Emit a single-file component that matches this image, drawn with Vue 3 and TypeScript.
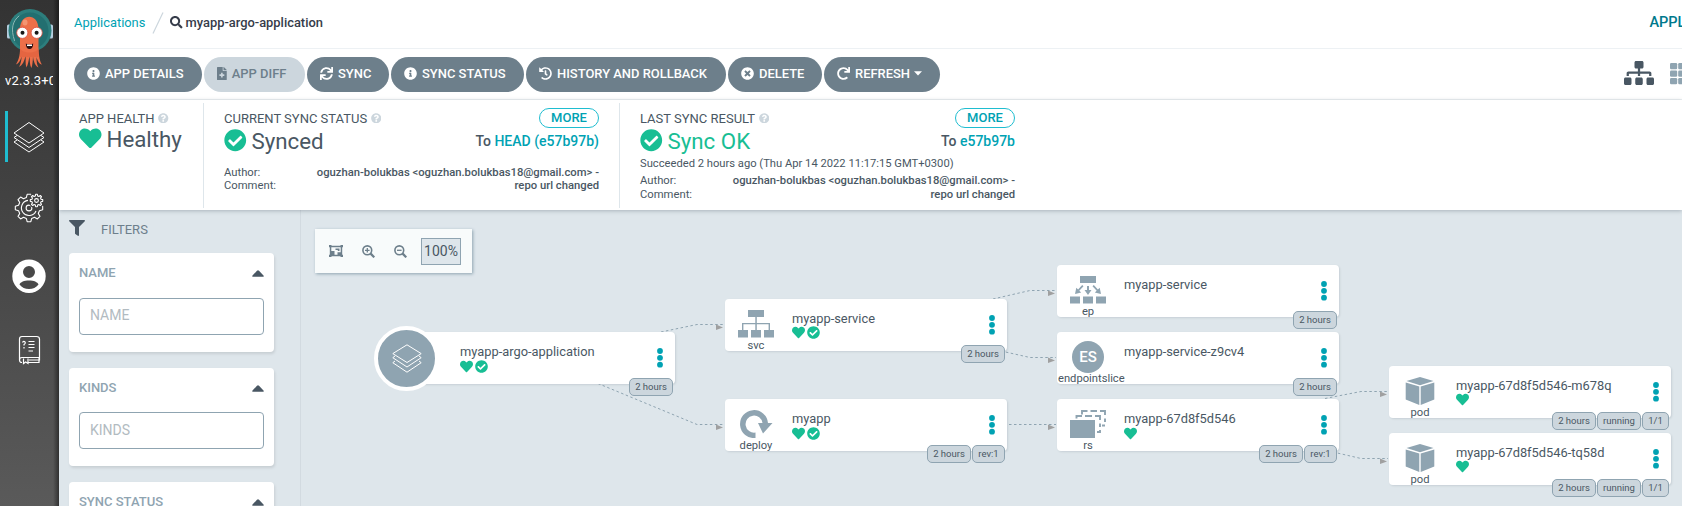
<script setup lang="ts">
interface Glyph {
  w: number
  d: string
}

const glyphs: Record<string, Glyph> = {
  heart: { w: 512, d: 'M462.3 62.6C407.5 15.9 326 24.3 275.7 76.2L256 96.5l-19.7-20.3C186.1 24.3 104.5 15.9 49.7 62.6c-62.8 53.6-66.1 149.8-9.9 207.9l193.5 199.8c12.5 12.9 32.8 12.9 45.3 0l193.5-199.8c56.3-58.1 53-154.3-9.8-207.9z' },
  check: { w: 512, d: 'M504 256c0 136.967-111.033 248-248 248S8 392.967 8 256 119.033 8 256 8s248 111.033 248 248zM227.314 387.314l184-184c6.248-6.248 6.248-16.379 0-22.627l-22.627-22.627c-6.248-6.249-16.379-6.249-22.628 0L216 308.118l-70.059-70.059c-6.248-6.248-16.379-6.248-22.628 0l-22.627 22.627c-6.248 6.248-6.248 16.379 0 22.627l104 104c6.249 6.249 16.379 6.249 22.628.001z' },
  info: { w: 512, d: 'M256 8C119.043 8 8 119.083 8 256c0 136.997 111.043 248 248 248s248-111.003 248-248C504 119.083 392.957 8 256 8zm0 110c23.196 0 42 18.804 42 42s-18.804 42-42 42-42-18.804-42-42 18.804-42 42-42zm56 254c0 6.627-5.373 12-12 12h-88c-6.627 0-12-5.373-12-12v-24c0-6.627 5.373-12 12-12h12v-64h-12c-6.627 0-12-5.373-12-12v-24c0-6.627 5.373-12 12-12h64c6.627 0 12 5.373 12 12v100h12c6.627 0 12 5.373 12 12v24z' },
  times: { w: 512, d: 'M256 8C119 8 8 119 8 256s111 248 248 248 248-111 248-248S393 8 256 8zm121.6 313.1c4.7 4.7 4.7 12.3 0 17L338 377.6c-4.7 4.7-12.3 4.7-17 0L256 312l-65.1 65.6c-4.7 4.7-12.3 4.7-17 0L134.4 338c-4.7-4.7-4.7-12.3 0-17l65.6-65-65.6-65.1c-4.7-4.7-4.7-12.3 0-17l39.6-39.6c4.7-4.7 12.3-4.7 17 0l65 65.7 65.1-65.6c4.7-4.7 12.3-4.7 17 0l39.6 39.6c4.7 4.7 4.7 12.3 0 17L312 256l65.6 65.1z' },
  question: { w: 512, d: 'M504 256c0 136.997-111.043 248-248 248S8 392.997 8 256C8 119.083 119.043 8 256 8s248 111.083 248 248zM262.655 90c-54.497 0-89.255 22.957-116.549 63.758-3.536 5.286-2.353 12.415 2.715 16.258l34.699 26.31c5.205 3.947 12.621 3.008 16.665-2.122 17.864-22.658 30.113-35.797 57.303-35.797 20.429 0 45.698 13.148 45.698 32.958 0 14.976-12.363 22.667-32.534 33.976C247.128 238.528 216 254.941 216 296v4c0 6.627 5.373 12 12 12h56c6.627 0 12-5.373 12-12v-1.333c0-28.462 83.186-29.647 83.186-106.667 0-58.002-60.165-102-116.531-102zM256 338c-25.365 0-46 20.635-46 46 0 25.364 20.635 46 46 46s46-20.636 46-46c0-25.365-20.635-46-46-46z' },
  sitemap: { w: 640, d: 'M128 352H32c-17.67 0-32 14.33-32 32v96c0 17.67 14.33 32 32 32h96c17.67 0 32-14.33 32-32v-96c0-17.67-14.33-32-32-32zm-24-80h192v48h48v-48h192v48h48v-57.59c0-21.17-17.23-38.41-38.41-38.41H344v-64h40c17.67 0 32-14.33 32-32V32c0-17.67-14.33-32-32-32H256c-17.67 0-32 14.33-32 32v96c0 17.67 14.33 32 32 32h40v64H94.41C73.23 224 56 241.23 56 262.41V320h48v-48zm264 80h-96c-17.67 0-32 14.33-32 32v96c0 17.67 14.33 32 32 32h96c17.67 0 32-14.33 32-32v-96c0-17.67-14.33-32-32-32zm240 0h-96c-17.67 0-32 14.33-32 32v96c0 17.67 14.33 32 32 32h96c17.67 0 32-14.33 32-32v-96c0-17.67-14.33-32-32-32z' },
  search: { w: 512, d: 'M505 442.7L405.3 343c-4.5-4.5-10.6-7-17-7H372c27.6-35.3 44-79.7 44-128C416 93.1 322.9 0 208 0S0 93.1 0 208s93.1 208 208 208c48.3 0 92.7-16.4 128-44v16.3c0 6.4 2.5 12.5 7 17l99.7 99.7c9.4 9.4 24.6 9.4 33.9 0l28.3-28.3c9.4-9.4 9.4-24.6.1-34zM208 336c-70.7 0-128-57.2-128-128 0-70.7 57.2-128 128-128 70.7 0 128 57.2 128 128 0 70.7-57.2 128-128 128z' },
  filter: { w: 512, d: 'M487.976 0H24.028C2.71 0-8.047 25.866 7.058 40.971L192 225.941V432c0 7.831 3.821 15.17 10.237 19.662l80 55.98C298.02 518.69 320 507.493 320 487.98V225.941l184.947-184.97C520.021 25.896 509.338 0 487.976 0z' },
  fileplus: { w: 384, d: 'M377 105L279.1 7c-4.5-4.5-10.6-7-17-7H256v128h128v-6.1c0-6.3-2.5-12.4-7-16.9zm-153 31V0H24C10.7 0 0 10.7 0 24v464c0 13.300 10.7 24 24 24h336c13.300 0 24-10.7 24-24V160H248c-13.200 0-24-10.800-24-24zm64 160v48c0 4.400-3.600 8-8 8h-56v56c0 4.400-3.600 8-8 8h-48c-4.400 0-8-3.600-8-8v-56h-56c-4.400 0-8-3.600-8-8v-48c0-4.400 3.600-8 8-8h56v-56c0-4.400 3.600-8 8-8h48c4.400 0 8 3.600 8 8v56h56c4.400 0 8 3.600 8 8z' },
  sync: { w: 512, d: 'M440.65 12.57l4 82.77A247.16 247.16 0 0 0 255.83 8C134.73 8 33.91 94.92 12.29 209.82A12 12 0 0 0 24.09 224h49.05a12 12 0 0 0 11.67-9.26 175.91 175.91 0 0 1 317-56.94l-101.46-4.86a12 12 0 0 0-12.57 12v47.41a12 12 0 0 0 12 12H500a12 12 0 0 0 12-12V12a12 12 0 0 0-12-12h-47.37a12 12 0 0 0-11.98 12.57zM255.83 432a175.61 175.61 0 0 1-146-77.8l101.8 4.87a12 12 0 0 0 12.57-12v-47.4a12 12 0 0 0-12-12H12a12 12 0 0 0-12 12V500a12 12 0 0 0 12 12h47.35a12 12 0 0 0 12-12.6l-4.15-82.57A247.17 247.17 0 0 0 255.83 504c121.11 0 221.93-86.92 243.55-201.82a12 12 0 0 0-11.8-14.18h-49.05a12 12 0 0 0-11.67 9.26A175.86 175.86 0 0 1 255.83 432z' },
  redo: { w: 512, d: 'M500.33 0h-47.41a12 12 0 0 0-12 12.57l4 82.76A247.42 247.42 0 0 0 256 8C119.34 8 7.9 119.53 8 256.19 8.1 393.07 119.1 504 256 504a247.1 247.1 0 0 0 166.18-63.91 12 12 0 0 0 .48-17.43l-34-34a12 12 0 0 0-16.38-.55A176 176 0 1 1 402.1 157.8l-101.53-4.87a12 12 0 0 0-12.57 12v47.41a12 12 0 0 0 12 12h200.33a12 12 0 0 0 12-12V12a12 12 0 0 0-12-12z' },
  history: { w: 512, d: 'M504 255.531c.253 136.64-111.18 248.372-247.82 248.468-59.015.042-113.223-20.53-155.822-54.911-11.077-8.94-11.905-25.541-1.839-35.607l11.267-11.267c8.609-8.609 22.353-9.551 31.891-1.984C173.062 425.135 212.781 440 256 440c101.705 0 184-82.311 184-184 0-101.705-82.311-184-184-184-48.814 0-93.149 18.969-126.068 49.932l50.754 50.754c10.08 10.08 2.941 27.314-11.313 27.314H24c-8.837 0-16-7.163-16-16V38.627c0-14.254 17.234-21.393 27.314-11.314l49.372 49.372C129.209 34.136 189.552 8 256 8c136.81 0 247.747 110.78 248 247.531zm-180.912 78.784l9.823-12.63c8.138-10.463 6.253-25.542-4.21-33.679L288 256.349V152c0-13.255-10.745-24-24-24h-16c-13.255 0-24 10.745-24 24v135.651l65.409 50.874c10.463 8.137 25.541 6.253 33.679-4.21z' },
}

const viewBox = (name: string) => `0 0 ${glyphs[name].w} 512`

interface Action {
  label: string
  icon: string
  width: number
  disabled?: boolean
  caret?: boolean
}

const actions: Action[] = [
  { label: 'APP DETAILS', icon: 'info', width: 128 },
  { label: 'APP DIFF', icon: 'fileplus', width: 101, disabled: true },
  { label: 'SYNC', icon: 'sync', width: 82 },
  { label: 'SYNC STATUS', icon: 'info', width: 133 },
  { label: 'HISTORY AND ROLLBACK', icon: 'history', width: 200 },
  { label: 'DELETE', icon: 'times', width: 94 },
  { label: 'REFRESH', icon: 'redo', width: 116, caret: true },
]

const filters: { title: string; input: boolean }[] = [
  { title: 'NAME', input: true },
  { title: 'KINDS', input: true },
  { title: 'SYNC STATUS', input: false },
]

interface TreeNode {
  name: string
  kind: string
  x: number
  y: number
  marks: string[]
  tags: string[]
}

// Node coordinates on the tree canvas
const nodes: TreeNode[] = [
  { name: 'myapp-argo-application', kind: 'app', x: 92, y: 122, marks: ['heart', 'check'], tags: ['2 hours'] },
  { name: 'myapp-service', kind: 'svc', x: 424, y: 88.5, marks: ['heart', 'check'], tags: ['2 hours'] },
  { name: 'myapp', kind: 'deploy', x: 424, y: 189, marks: ['heart', 'check'], tags: ['2 hours', 'rev:1'] },
  { name: 'myapp-service', kind: 'ep', x: 756, y: 55, marks: [], tags: ['2 hours'] },
  { name: 'myapp-service-z9cv4', kind: 'endpointslice', x: 756, y: 122, marks: [], tags: ['2 hours'] },
  { name: 'myapp-67d8f5d546', kind: 'rs', x: 756, y: 189, marks: ['heart'], tags: ['2 hours', 'rev:1'] },
  { name: 'myapp-67d8f5d546-m678q', kind: 'pod', x: 1088, y: 155.5, marks: ['heart'], tags: ['2 hours', 'running', '1/1'] },
  { name: 'myapp-67d8f5d546-tq58d', kind: 'pod', x: 1088, y: 222.5, marks: ['heart'], tags: ['2 hours', 'running', '1/1'] },
]

const tagWidths: Record<string, number> = { '2 hours': 44, 'rev:1': 33, running: 44, '1/1': 27 }

const edges: number[][][] = [
  [[360, 122], [396, 114.5], [423, 114.5]],
  [[297, 173.5], [396, 214.5], [423, 214.5]],
  [[692, 89], [729, 80.5], [755, 80.5]],
  [[700, 141], [729, 147.5], [755, 147.5]],
  [[708, 214.5], [755, 214.5]],
  [[1024, 188.5], [1060, 181.5], [1087, 181.5]],
  [[1032, 242], [1060, 248.5], [1087, 248.5]],
]
const points = (edge: number[][]) => edge.map((p) => p.join(',')).join(' ')
const arrow = (edge: number[][]) => {
  const [x, y] = edge[edge.length - 1]
  return `${x - 8},${y} ${x - 1},${y + 3} ${x - 8},${y + 5.5}`
}

function gear(cx: number, cy: number, inner: number, outer: number, teeth: number): string {
  const step = (Math.PI * 2) / teeth
  const out: string[] = []
  for (let i = 0; i < teeth; i++) {
    const a = i * step
    const corners: [number, number][] = [[-0.32, inner], [-0.17, outer], [0.17, outer], [0.32, inner]]
    for (const [k, r] of corners) {
      out.push(`${(cx + Math.cos(a + k * step) * r).toFixed(2)} ${(cy + Math.sin(a + k * step) * r).toFixed(2)}`)
    }
  }
  return `M${out.join('L')}Z`
}
const bigGear = gear(29, 26, 10.8, 13.8, 8)
const smallGear = gear(36.5, 18.5, 4.7, 6.3, 8)
</script>

<template>
  <div class="shell">
    <aside class="sidebar">
      <svg class="logo" viewBox="0 0 59 70" width="59" height="70">
        <rect x="7" y="24.500" width="4" height="14" rx="1.500" fill="#b5cfe0" />
        <rect x="49" y="24.500" width="4" height="14" rx="1.500" fill="#b5cfe0" />
        <circle cx="30" cy="30.500" r="21.500" fill="#2d7e7d" />
        <circle cx="30" cy="31" r="18.500" fill="#236f70" />
        <path d="M14.500 40.500C10.500 29 12.500 21 19 16" fill="none" stroke="#8fb9b6" stroke-width="1" stroke-linecap="round" />
        <path d="M20 29C20 12.500 38.500 12.500 38.500 29V49C39 57 40 62 42 64.500C39 64 37.500 61 36.500 57C36.500 62 37 65 38.500 67.500C35 66 33.500 61 33 56.500C32.800 61 32.500 65 31.500 68C29.500 65 30 60 29.500 56.500C28.500 61 28 65 26.500 67.500C25 64 26 60 25.500 56C24.500 61 22.500 65 19 67C21 63 21.500 60 21.500 56.500C20.500 61 18.500 63.500 16 64.500C18.500 60 20 56 20 49Z" fill="#ed6f49" />
        <path d="M20 48C22 54 37 54 38.500 48V57H20Z" fill="#e2613f" opacity=".75" />
        <ellipse cx="25" cy="22.500" rx="2.500" ry="3" fill="#f7a585" opacity=".7" />
        <circle cx="22.300" cy="32.800" r="5.600" fill="#fff" stroke="#d94c3d" stroke-width=".8" />
        <circle cx="36.700" cy="32.800" r="5.600" fill="#fff" stroke="#d94c3d" stroke-width=".8" />
        <circle cx="22.500" cy="32.700" r="2" fill="#171717" />
        <circle cx="36.600" cy="32.700" r="2" fill="#171717" />
        <path d="M25.800 43.500Q29.500 45.500 33.200 43.500Q33 49 29.500 49Q26 49 25.800 43.500Z" fill="#2a1012" />
        <path d="M27 44.500h5v1.500h-5z" fill="#fff" />
      </svg>
      <div class="version">v2.3.3+0</div>
      <nav class="nav">
        <a class="nav-item active">
          <svg viewBox="0 0 58 51" width="58" height="51" fill="none" stroke="#fff" stroke-width="1" stroke-linejoin="round">
            <path d="M29 11.500L44 22 29 32 14 22Z" />
            <path d="M17 24.500L14 26.500 29 36.500 44 26.500 41 24.500M17 29L14 31 29 41 44 31 41 29" />
          </svg>
        </a>
        <a class="nav-item">
          <svg viewBox="0 0 58 51" width="58" height="51" fill="none" stroke="#fff" stroke-width="1.100" stroke-linejoin="round">
            <path :d="bigGear" />
            <path d="M36 29A7.600 7.600 0 1 1 28 18.400" />
            <circle cx="29" cy="26" r="2.900" />
            <circle class="gear-gap" cx="36.500" cy="18.500" r="8" />
            <path :d="smallGear" />
            <circle cx="36.500" cy="18.500" r="1.900" />
          </svg>
        </a>
        <a class="nav-item">
          <svg viewBox="0 0 58 51" width="58" height="51">
            <path fill="#fff" fill-rule="evenodd" d="M29 6.500a16.700 16.700 0 1 0 0 33.400a16.700 16.700 0 1 0 0-33.400ZM29 13a6 6 0 1 1 0 12a6 6 0 1 1 0-12ZM29 27.500C34 27.500 37.500 29 38.500 31.500C36 34.500 33 36 29 36S22 34.500 19.500 31.500C20.500 29 24 27.500 29 27.500Z" />
          </svg>
        </a>
        <a class="nav-item">
          <svg viewBox="0 0 58 51" width="58" height="51" fill="none" stroke="#fff" stroke-width="1.200">
            <path d="M22 38.500Q19.500 38.500 19.500 36V15Q19.500 12.500 22 12.500H36.500Q39.500 12.500 39.500 15V36.500M39.500 33.500H22Q19.500 33.500 19.500 36M28 38.500H39V34M29 36H39M23.500 34.500V39.500L25.700 38 28 39.500V34.500" />
            <path d="M22.500 18.500Q23 17 24.500 17.500Q26.300 19 24 20.500V21.500M24 23V24.500M28.500 17.500H34.500M28.500 20.500H34.500M28.500 23.500H34.500M28.500 27H33" />
          </svg>
        </a>
      </nav>
    </aside>

    <main class="main">
      <header class="topbar">
        <a class="crumb">Applications</a>
        <svg class="slash" width="12" height="22" viewBox="0 0 12 22"><path d="M1 21.500L11 .5" stroke="#ccd6dd" stroke-width="1.200" /></svg>
        <svg class="crumb-icon" width="12.500" height="12.500" :viewBox="viewBox('search')"><path :d="glyphs.search.d" /></svg>
        <span class="current">myapp-argo-application</span>
        <span class="page-title">APPLICATION DETAILS TREE</span>
      </header>

      <div class="toolbar">
        <button
          v-for="a in actions"
          :key="a.label"
          class="btn"
          :class="{ disabled: a.disabled }"
          :style="{ width: a.width + 'px' }"
        >
          <svg :width="(13 * glyphs[a.icon].w) / 512" height="13" :viewBox="viewBox(a.icon)"><path :d="glyphs[a.icon].d" /></svg>
          <span>{{ a.label }}</span>
          <svg v-if="a.caret" class="caret" width="8" height="5" viewBox="0 0 8 5"><path d="M0 .3H8L4 4.600Z" /></svg>
        </button>
        <div class="views">
          <svg class="view-active" width="30" height="24" :viewBox="viewBox('sitemap')"><path :d="glyphs.sitemap.d" /></svg>
          <svg class="view-grid" width="24" height="22" viewBox="0 0 24 22">
            <g v-for="row in 3" :key="row">
              <rect v-for="col in 3" :key="col" :x="(col - 1) * 8.2" :y="(row - 1) * 7.5" width="7.200" height="6.200" rx="1.200" />
            </g>
          </svg>
        </div>
      </div>

      <section class="status">
        <div class="panel health">
          <div class="panel-title">APP HEALTH<svg width="10.500" height="10.500" :viewBox="viewBox('question')"><path :d="glyphs.question.d" /></svg></div>
          <div class="big"><svg width="22.500" height="22.500" :viewBox="viewBox('heart')"><path :d="glyphs.heart.d" /></svg><span>Healthy</span></div>
        </div>
        <div class="panel detail">
          <div class="panel-title">CURRENT SYNC STATUS<svg width="10.500" height="10.500" :viewBox="viewBox('question')"><path :d="glyphs.question.d" /></svg><a class="more">MORE</a></div>
          <div class="big"><svg width="22.500" height="22.500" :viewBox="viewBox('check')"><path :d="glyphs.check.d" /></svg><span>Synced</span><div class="to">To <a>HEAD (e57b97b)</a></div></div>
          <div class="commit current-commit">
            <div><span>Author:</span><b>oguzhan-bolukbas &lt;oguzhan.bolukbas18@gmail.com&gt; -</b></div>
            <div><span>Comment:</span><b>repo url changed</b></div>
          </div>
        </div>
        <div class="panel detail last">
          <div class="panel-title">LAST SYNC RESULT<svg width="10.500" height="10.500" :viewBox="viewBox('question')"><path :d="glyphs.question.d" /></svg><a class="more">MORE</a></div>
          <div class="big"><svg width="22.500" height="22.500" :viewBox="viewBox('check')"><path :d="glyphs.check.d" /></svg><span class="ok">Sync OK</span><div class="to">To <a>e57b97b</a></div></div>
          <div class="when">Succeeded 2 hours ago (Thu Apr 14 2022 11:17:15 GMT+0300)</div>
          <div class="commit last-commit">
            <div><span>Author:</span><b>oguzhan-bolukbas &lt;oguzhan.bolukbas18@gmail.com&gt; -</b></div>
            <div><span>Comment:</span><b>repo url changed</b></div>
          </div>
        </div>
      </section>

      <div class="body">
        <div class="filters">
          <div class="filters-head">
            <svg width="16" height="16" :viewBox="viewBox('filter')"><path :d="glyphs.filter.d" /></svg>
            <span>FILTERS</span>
          </div>
          <div v-for="f in filters" :key="f.title" class="filter">
            <div class="filter-title">
              <span>{{ f.title }}</span>
              <svg width="12" height="7" viewBox="0 0 12 7"><path d="M.8 6.800Q-.3 6.500.5 5.500L5 .7Q6-.2 7 .7L11.500 5.500Q12.300 6.500 11.200 6.800Z" /></svg>
            </div>
            <input v-if="f.input" type="text" :placeholder="f.title" />
          </div>
        </div>

        <div class="canvas">
          <div class="zoombar">
            <svg width="14" height="12" viewBox="0 0 14 12" fill="#6d7f8b">
              <path fill-rule="evenodd" d="M0 0H2.500V.8H11.500V0H14V2.200H13.200V9.800H14V12H11.500V11.200H2.500V12H0V9.800H.8V2.200H0ZM2.300 2.300V6H5.500V9.700H8.500V7.200H11.700V2.300ZM6.500 3.500H10.500V6H8.800V5H6.500Z" />
            </svg>
            <svg v-for="plus in [true, false]" :key="String(plus)" width="13" height="13" viewBox="0 0 13 13" fill="none" stroke="#6d7f8b">
              <circle cx="5.300" cy="5.300" r="4.400" stroke-width="1.600" />
              <path d="M8.600 8.600L12.300 12.300" stroke-width="2.200" />
              <path :d="plus ? 'M3 5.300H7.600M5.300 3V7.600' : 'M3 5.300H7.600'" stroke-width="1.300" />
            </svg>
            <span class="percent">100%</span>
          </div>

          <svg class="edges" width="1381" height="296" viewBox="0 0 1381 296">
            <g v-for="(e, i) in edges" :key="i">
              <polyline :points="points(e)" fill="none" stroke="#8fa4b1" stroke-width="1" stroke-dasharray="2.500 2.500" />
              <polygon :points="arrow(e)" fill="#a0a0a0" />
            </g>
          </svg>

          <div v-for="n in nodes" :key="n.name + n.kind" class="node" :style="{ left: n.x + 'px', top: n.y + 'px' }">
            <div class="kind" :class="{ root: n.kind === 'app' }">
              <svg v-if="n.kind === 'app'" width="30" height="29" viewBox="0 0 30 29" fill="none" stroke="#fff" stroke-width="1" stroke-linejoin="round">
                <path d="M15 .8L29.200 9.600 15 18.500.8 9.600Z" />
                <path d="M3 12L.8 13.700 15 23 29.200 13.700 27 12M3 17L.8 18.700 15 28.200 29.200 18.700 27 17" />
              </svg>
              <svg v-else-if="n.kind === 'svc'" width="36" height="28" viewBox="0 0 36 28" fill="#8fa4b1">
                <path d="M10 0H26V7H18.800V13H32V20H36V27.500H26V20H30.600V14.300H18.800V20H23V27.500H13V20H17.300V14.300H5.400V20H10V27.500H0V20H4V13H17.300V7H10Z" />
              </svg>
              <svg v-else-if="n.kind === 'deploy'" class="deploy" width="33" height="28" viewBox="0 0 33 28" fill="#8fa4b1">
                <path d="M15.500 28A14 14 0 1 1 28 13H32.500L23 23.500 18 13H22.500A8.500 8.500 0 1 0 15.500 22.500Z" />
              </svg>
              <svg v-else-if="n.kind === 'ep'" width="36" height="28" viewBox="0 0 36 28" fill="#8fa4b1">
                <path d="M10 0H26V7H10ZM0 20.500H10V27.500H0ZM13 20.500H23V27.500H13ZM26 20.500H36V27.500H26Z" />
                <path d="M17 10H19V14H21.500L18 19 14.500 14H17ZM12.200 9L13.500 10.300 9.300 14.700 11.200 16.500 5 18 6.300 11.800 8.100 13.400ZM23.800 9L22.500 10.300 26.700 14.700 24.800 16.500 31 18 29.700 11.800 27.900 13.400Z" />
              </svg>
              <span v-else-if="n.kind === 'endpointslice'" class="initials">ES</span>
              <svg v-else-if="n.kind === 'rs'" width="36" height="28" viewBox="0 0 36 28" fill="#8fa4b1">
                <path d="M0 10H25V28H0Z" />
                <path d="M6.500 8.500V6H12M15 6H22M25 6H30V10M30 13.500V17M30 20V22H27M12 4.500V1H17.500M20.500 1H27M30 1H35V5M35 8.500V12M35 15.500H32" fill="none" stroke="#8fa4b1" stroke-width="1.900" />
              </svg>
              <svg v-else width="30" height="28" viewBox="0 0 30 28" fill="#8fa4b1">
                <path d="M15 0L28.500 3.900 15 8.200 1.500 3.900ZM.7 5.600L14.300 9.600V28L.7 22.500ZM29.300 5.600L15.700 9.600V28L29.300 22.500Z" />
              </svg>
              <div v-if="n.kind !== 'app'" class="kind-name" :class="{ long: n.kind === 'endpointslice' }">{{ n.kind }}</div>
            </div>
            <div class="info">
              <div class="name">{{ n.name }}</div>
              <div class="marks">
                <svg v-for="m in n.marks" :key="m" width="13" height="13" :viewBox="viewBox(m)"><path :d="glyphs[m].d" /></svg>
              </div>
            </div>
            <svg class="dots" width="6" height="20" viewBox="0 0 6 20">
              <circle cx="3" cy="3" r="2.900" /><circle cx="3" cy="9.800" r="2.900" /><circle cx="3" cy="16.700" r="2.900" />
            </svg>
            <div class="tags">
              <span v-for="t in n.tags" :key="t" class="tag" :style="{ width: tagWidths[t] + 'px' }">{{ t }}</span>
            </div>
          </div>
        </div>
      </div>
    </main>
  </div>
</template>

<style>
body {
  margin: 0;
  overflow: hidden;
}
</style>

<style scoped>
* {
  box-sizing: border-box;
}
.shell {
  display: flex;
  width: 1682px;
  height: 506px;
  overflow: hidden;
  font-family: Roboto, "Liberation Sans", sans-serif;
  font-size: 13px;
  color: #495763;
  background: #dee6eb;
}
svg {
  display: block;
  flex: none;
}
.sidebar {
  width: 59px;
  flex: none;
  color: #fff;
  background: linear-gradient(to right, transparent 53px, rgba(0, 0, 0, 0.45)), linear-gradient(#333, #5a5a5a);
}
.version {
  margin: 2px 0 0 5px;
  width: 48px;
  height: 18px;
  line-height: 18px;
  font-size: 13px;
  letter-spacing: 0.2px;
  overflow: hidden;
  white-space: nowrap;
}
.nav {
  display: flex;
  flex-direction: column;
  gap: 20px;
  margin-top: 21px;
}
.nav-item {
  height: 51px;
}
.active {
  background: linear-gradient(#1fbdd0, #1fbdd0) 5px 0 / 3px 51px no-repeat;
}
.gear-gap {
  fill: #414141;
  stroke: none;
}
.main {
  display: flex;
  flex-direction: column;
  flex: 1;
  min-width: 0;
}
.topbar {
  display: flex;
  align-items: center;
  height: 49px;
  flex: none;
  padding: 0 0 3px 15px;
  background: #fff;
  border-bottom: 1px solid #edf1f4;
  white-space: nowrap;
  overflow: hidden;
  font-size: 12.9px;
}
.crumb {
  width: 70px;
  color: #00a2b3;
}
.slash {
  margin-left: 7.5px;
}
.crumb-icon {
  margin-left: 6.5px;
  fill: #363c4a;
}
.current {
  margin-left: 3px;
  width: 1464px;
  flex: none;
  font-weight: 500;
  color: #363c4a;
}
.page-title {
  font-size: 14.5px;
  font-weight: 500;
  color: #00798c;
}
.toolbar {
  display: flex;
  gap: 2px;
  height: 51px;
  flex: none;
  padding: 8px 0 0 15px;
  background: #fff;
  border-bottom: 1px solid #edf1f4;
}
.btn {
  display: flex;
  align-items: center;
  height: 35px;
  flex: none;
  padding: 0 0 2px 13px;
  border: 0;
  border-radius: 18px;
  background: #6d7f8b;
  color: #fff;
  font: 500 12.95px Roboto, "Liberation Sans", sans-serif;
  white-space: nowrap;
}
.btn svg {
  fill: currentColor;
}
.btn span {
  margin-left: 5px;
}
.btn .caret {
  margin-left: 4px;
}
.disabled {
  background: #ccd6dd;
  color: #6d7f8b;
}
.views {
  display: flex;
  margin-left: auto;
  width: 58px;
  padding-top: 4px;
  overflow: hidden;
}
.view-active {
  fill: #495763;
  margin-right: 16px;
}
.view-grid {
  fill: #8fa4b1;
  margin-top: 1.5px;
}
.status {
  display: flex;
  height: 110px;
  flex: none;
  padding: 3px 0 2px;
  background: #fff;
  box-shadow: 0 1px 4px rgba(73, 87, 99, 0.35);
  position: relative;
}
.panel {
  padding: 7.5px 20px 0;
  border-right: 1px solid #dee6eb;
}
.health {
  width: 145px;
}
.detail {
  width: 416px;
}
.last {
  width: 415px;
  border: 0;
}
.panel-title {
  display: flex;
  align-items: center;
  height: 15px;
  font-size: 13px;
  white-space: nowrap;
}
.panel-title svg {
  margin-left: 3.5px;
  fill: #ccd6dd;
}
.more {
  margin-left: auto;
  width: 60px;
  height: 20px;
  line-height: 18px;
  border: 1px solid #1fbdd0;
  border-radius: 10px;
  text-align: center;
  font-weight: 500;
  color: #00a2b3;
}
.big {
  display: flex;
  align-items: center;
  height: 27px;
  margin-top: 1.5px;
  font-size: 22.3px;
}
.health .big {
  margin-top: -0.5px;
}
.big svg {
  fill: #18be94;
}
.big > span {
  margin-left: 5px;
}
.ok {
  color: #18be94;
}
.to {
  margin-left: auto;
  font-size: 14px;
  font-weight: 500;
}
.to a {
  color: #00a2b3;
}
.commit {
  font-size: 11.25px;
}
.commit div {
  display: flex;
  justify-content: space-between;
}
.commit b {
  font-weight: 500;
}
.current-commit {
  margin-top: 12px;
  line-height: 13px;
}
.last-commit {
  margin-top: 3px;
  line-height: 14px;
}
.when {
  margin-top: 2px;
  font-size: 11.2px;
  line-height: 15px;
  white-space: nowrap;
}
.body {
  display: flex;
  flex: 1;
  min-height: 0;
}
.filters {
  width: 242px;
  flex: none;
  padding: 10px 26px 0 10px;
  border-right: 1px solid #d2dae0;
}
.filters-head {
  display: flex;
  align-items: center;
  height: 19px;
  margin-bottom: 14px;
  color: #6d7f8b;
}
.filters-head svg {
  fill: #495763;
  margin-top: -3px;
}
.filters-head span {
  margin-left: 16px;
}
.filter {
  height: 98.5px;
  margin-bottom: 16px;
  padding: 10px;
  border-radius: 4px;
  background: #fff;
  box-shadow: 1px 2px 3px rgba(0, 0, 0, 0.1);
}
.filter-title {
  display: flex;
  align-items: center;
  justify-content: space-between;
  height: 19px;
  margin-bottom: 15.5px;
  font-weight: 500;
  color: #8fa4b1;
}
.filter-title svg {
  fill: #495763;
  margin-top: 2px;
}
.filter input {
  display: block;
  width: 100%;
  height: 37px;
  padding: 0 10px 2px;
  border: 1px solid #8fa4b1;
  border-radius: 4px;
  background: #fff;
  font: 14px Roboto, "Liberation Sans", sans-serif;
}
.filter input::placeholder {
  color: #b2bbc1;
}
.canvas {
  position: relative;
  flex: 1;
  min-width: 0;
  padding: 19px 0 0 14px;
}
.zoombar {
  display: flex;
  align-items: center;
  width: 157px;
  height: 44px;
  padding: 0 11px 0 14px;
  gap: 19px;
  background: #f8fbfb;
  box-shadow: 1px 1px 3px #8fa4b1;
}
.percent {
  flex: none;
  margin-left: -5px;
  width: 40px;
  height: 27px;
  line-height: 24px;
  border: 1px solid #8fa4b1;
  background: #dee6eb;
  font-size: 14px;
  text-align: center;
}
.edges {
  position: absolute;
  left: 0;
  top: 0;
}
.node {
  position: absolute;
  display: flex;
  width: 282px;
  height: 52px;
  border-radius: 4px;
  background: #fff;
  box-shadow: 1px 1px 2px rgba(73, 87, 99, 0.15);
}
.kind {
  display: flex;
  flex-direction: column;
  align-items: center;
  width: 62px;
  flex: none;
  padding-top: 11px;
}
.root {
  justify-content: center;
  width: 65px;
  height: 65px;
  margin: -6.5px 16px 0 -19px;
  padding: 0;
  border: 4px solid #fff;
  border-radius: 50%;
  background: #8fa4b1;
}
.kind-name {
  margin-top: 1px;
  font-size: 11.2px;
  line-height: 13px;
}
.long {
  align-self: flex-start;
  margin-left: 1px;
}
.initials {
  width: 32px;
  height: 32px;
  margin: -2px 0;
  line-height: 32px;
  border-radius: 50%;
  background: #8fa4b1;
  color: #fff;
  text-align: center;
  font-size: 15px;
  font-weight: 500;
}
.info {
  width: 180px;
  flex: none;
  padding: 12px 0 0 5px;
}
.name {
  font-size: 12.85px;
  line-height: 15px;
  white-space: nowrap;
}
.marks {
  display: flex;
  gap: 2px;
  margin-top: 0.5px;
}
.marks svg {
  fill: #18be94;
}
.dots {
  margin: 16px 12px 0 auto;
  fill: #00a2b3;
}
.tags {
  position: absolute;
  right: 2px;
  bottom: -12px;
  display: flex;
  gap: 1px;
}
.tag {
  height: 18px;
  line-height: 16px;
  border: 1px solid #8fa4b1;
  border-radius: 5px;
  background: #ccd6dd;
  text-align: center;
  font-size: 9.5px;
  color: #495763;
  white-space: nowrap;
}
</style>
